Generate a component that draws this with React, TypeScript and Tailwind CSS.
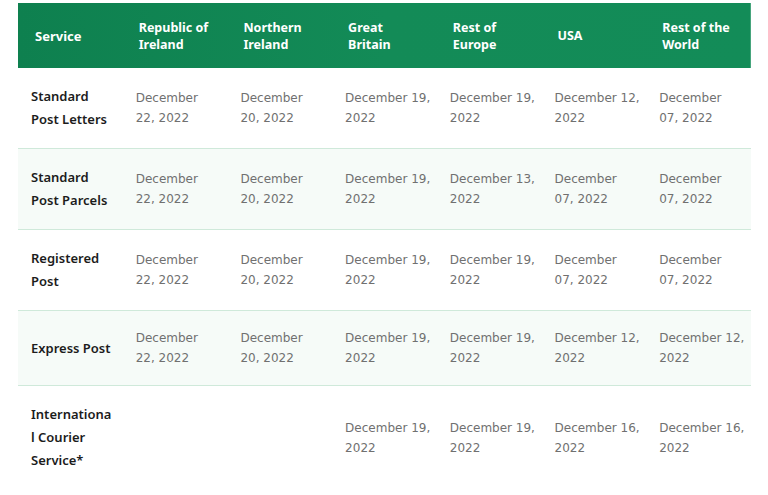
import React from 'react';

type Row = {
  service: string[];
  dates: string[][];
  shaded?: boolean;
};

const columns: string[][] = [
  ['Republic of', 'Ireland'],
  ['Northern', 'Ireland'],
  ['Great', 'Britain'],
  ['Rest of', 'Europe'],
  ['USA'],
  ['Rest of the', 'World'],
];

// split where the original layout wraps
const d = (day: string): string[] =>
  day.startsWith('1') ? [`December ${day},`, '2022'] : ['December', `${day}, 2022`];

const rows: Row[] = [
  { service: ['Standard', 'Post Letters'], dates: ['22', '20', '19', '19', '12', '07'].map(d) },
  { service: ['Standard', 'Post Parcels'], shaded: true, dates: ['22', '20', '19', '13', '07', '07'].map(d) },
  { service: ['Registered', 'Post'], dates: ['22', '20', '19', '19', '07', '07'].map(d) },
  { service: ['Express Post'], shaded: true, dates: ['22', '20', '19', '19', '12', '12'].map(d) },
  {
    service: ['Internationa', 'l Courier', 'Service*'],
    dates: [[], [], d('19'), d('19'), d('16'), d('16')],
  },
];

export default function App() {
  return (
    <div className="w-[768px] h-[495px] overflow-hidden bg-white pt-[3px] pl-[18px]">
      <table className="w-[733px] table-fixed border-collapse">
        <thead>
          <tr className="h-[65px] bg-gradient-to-r from-[#0e804f] via-[#138b57] to-[#138c58] text-white">
            <th className="pl-[17px] pr-2 text-left align-middle text-[13px] leading-4 font-bold font-['Noto_Sans',sans-serif]">
              Service
            </th>
            {columns.map((c) => (
              <th
                key={c.join(' ')}
                className="pl-[16px] pr-1 text-left align-middle text-[12.5px] leading-[17px] font-bold font-['Noto_Sans',sans-serif]"
              >
                {c.map((line) => (
                  <span key={line} className="block whitespace-nowrap">
                    {line}
                  </span>
                ))}
              </th>
            ))}
          </tr>
        </thead>
        <tbody>
          {rows.map((r, i) => (
            <tr
              key={r.service.join(' ')}
              className={`${r.shaded ? 'bg-[#f6fbf8]' : 'bg-white'} ${i < rows.length - 1 ? 'border-b border-[#cfe9da]' : ''}`}
            >
              <td className="pl-[13px] pr-1 py-[17px] align-middle text-[13px] leading-[23px] font-semibold text-[#1c1c1c] font-['Noto_Sans',sans-serif]">
                {r.service.map((line) => (
                  <span key={line} className="block whitespace-nowrap">
                    {line}
                  </span>
                ))}
              </td>
              {r.dates.map((lines, j) => (
                <td
                  key={j}
                  className="pl-[13px] pr-1 py-[17px] align-middle text-[12px] leading-[20px] font-normal text-[#707070] font-['DejaVu_Sans',sans-serif]"
                >
                  {lines.map((line) => (
                    <span key={line} className="block whitespace-nowrap">
                      {line}
                    </span>
                  ))}
                </td>
              ))}
            </tr>
          ))}
        </tbody>
      </table>
    </div>
  );
}
